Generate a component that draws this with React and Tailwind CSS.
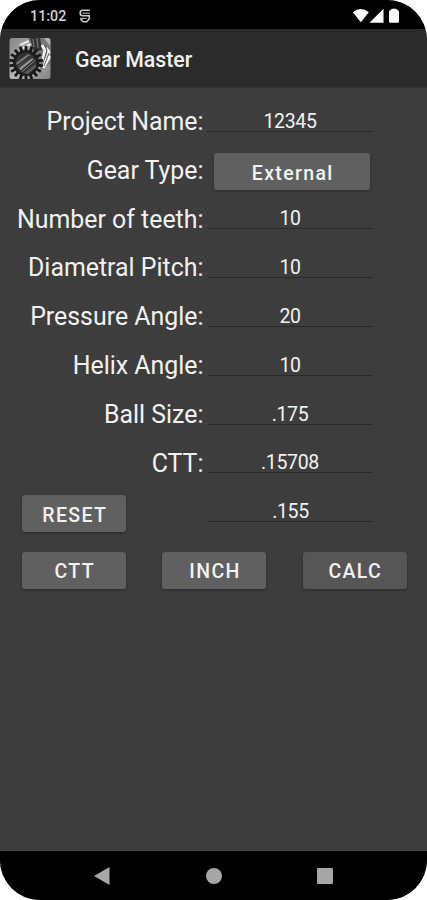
// App.jsx - Gear Master measurement form
import React, { useState } from 'react';

const fields = [
  { id: 'project', label: 'Project Name:', value: '12345' },
  { id: 'type', label: 'Gear Type:', button: 'External' },
  { id: 'teeth', label: 'Number of teeth:', value: '10' },
  { id: 'pitch', label: 'Diametral Pitch:', value: '10' },
  { id: 'pressure', label: 'Pressure Angle:', value: '20' },
  { id: 'helix', label: 'Helix Angle:', value: '10' },
  { id: 'ball', label: 'Ball Size:', value: '.175' },
  { id: 'ctt', label: 'CTT:', value: '.15708' },
];

const TEETH = Array.from({ length: 18 }, (_, i) => i * 20);

const GearLogo = () => (
  <svg width="42" height="42" viewBox="0 0 42 42" className="shrink-0 mt-px">
    <defs>
      <linearGradient id="plate" x1="0" y1="0" x2="1" y2="1">
        <stop offset="0" stopColor="#858585" />
        <stop offset="0.5" stopColor="#b5b5b5" />
        <stop offset="1" stopColor="#808080" />
      </linearGradient>
      <clipPath id="plateClip">
        <rect x="0.5" width="41" height="41" rx="2.5" />
      </clipPath>
    </defs>
    <g clipPath="url(#plateClip)">
      <rect width="42" height="42" fill="url(#plate)" />
      {/* Rear helical gear */}
      <path d="M19 0h16l6 8v18l-9 6-10-21z" fill="#777" />
      <path d="M21 0h10l2 12-8 2z" fill="#333" />
      <path d="M24 1l1 8M28 0l1 10" stroke="#777" strokeWidth="1.2" />
      <path d="M11 7l9-4M14 10l8-4" stroke="#e8e8e8" strokeWidth="2" />
      <path d="M33 7l3 5-2 10M37 10l3 4-5 14M41 18l-7 12" stroke="#f4f4f4" strokeWidth="3" fill="none" />
      <path d="M35.5 7l2.5 5-3 10M40 15l-5 13" stroke="#333" strokeWidth="0.8" fill="none" />
      {/* Front spur gear */}
      <g transform="translate(17 25)">
        {TEETH.map((a) => (
          <rect key={a} x="-1.4" y="-17.2" width="2.8" height="6" fill="#161616" transform={`rotate(${a})`} />
        ))}
        <circle r="13" fill="#1c1c1c" />
        <circle r="10.5" fill="#323232" />
        <path d="M-10 0L2-9l3 2-13 11z" fill="#777" />
        <path d="M-7 5L6-5l3 3L-4 9z" fill="#909090" />
        <path d="M-2 10L10 1v3L2 11z" fill="#5c5c5c" />
        <path d="M-9 3L4-7M-5 8L8-3" stroke="#222" strokeWidth="1.2" />
      </g>
    </g>
  </svg>
);

const StatusBar = () => (
  <div className="h-[29px] bg-black flex items-center justify-between pl-[30px] pr-[27px] pt-[3px]">
    <div className="flex items-center">
      <span className="w-[49px] text-[14.3px] leading-none font-medium text-[#d0d0d0]">11:02</span>
      <svg width="12" height="14" viewBox="0 0 12 14" fill="none" stroke="#c8c8c8" strokeWidth="1.6">
        <path d="M10.8 1.3H3.5Q1.2 1.3 1.2 4t2.3 2.7H10.3V9.8L7.8 12.8H4.2L1.5 9.8" />
        <path d="M3.5 4.2H10.8M1 9.4h6.5" strokeWidth="1" />
      </svg>
    </div>
    <svg width="48" height="16" viewBox="0 0 48 16" fill="#fff">
      <path d="M.8 4.2Q8.8-2.2 16.8 4.2L8.8 14.2z" />
      <path d="M31.5.8v14h-14z" />
      <path d="M40 .8h4l2 1.4q1 .8 1 1.8v9.4q0 1.4-1.4 1.4h-7.2q-1.4 0-1.4-1.4V4q0-1 1-1.8z" />
    </svg>
  </div>
);

const FormButton = ({ children, className = '', onClick }) => (
  <button
    type="button"
    onClick={onClick}
    className={`h-[37px] pt-1 pl-[1.5px] rounded-[3px] text-[19.5px] leading-none font-medium tracking-[1.35px] text-[#f2f2f2] shadow-[0_1px_3px_rgba(0,0,0,0.35)] ${className}`}
  >
    {children}
  </button>
);

const FormInput = ({ value, onChange, label }) => (
  <input
    aria-label={label}
    value={value}
    onChange={onChange}
    className="w-[165px] h-[31px] ml-1 mb-[9px] pt-[11px] bg-transparent border-b border-[#292929] text-center text-[19.5px] leading-none tracking-[-0.35px] text-[#f2f2f2] outline-none"
  />
);

const App = () => {
  const [values, setValues] = useState(
    Object.fromEntries(fields.map((f) => [f.id, f.value || '']))
  );
  const [result, setResult] = useState('.155');

  const update = (id) => (e) => setValues({ ...values, [id]: e.target.value });

  return (
    <div className="w-[427px] h-[900px] bg-white font-['Roboto',sans-serif]">
      <div className="h-full flex flex-col rounded-[40px] overflow-hidden bg-[#3d3d3d]">
        <StatusBar />

        <header className="h-[59px] bg-[#2b2b2b] flex items-center pl-[9px] gap-6 border-b border-[#333]">
          <GearLogo />
          <h1 className="pt-[3px] text-[21.3px] font-medium text-[#f2f2f2]">Gear Master</h1>
        </header>

        <main className="flex-1 pt-[8.5px]">
          {fields.map((field) => (
            <div key={field.id} className="h-[48.8px] flex items-center">
              <label className="w-[203.5px] shrink-0 pt-[3px] text-right text-[24.9px] leading-none text-[#f2f2f2]">
                {field.label}
              </label>
              {field.button ? (
                <FormButton className="w-[156px] ml-[10.5px] mt-1 bg-[#606060]">{field.button}</FormButton>
              ) : (
                <FormInput label={field.label} value={values[field.id]} onChange={update(field.id)} />
              )}
            </div>
          ))}

          <div className="h-[48.8px] flex items-center pl-[22px]">
            <FormButton className="w-[104px] mr-[78px] mt-1 bg-[#606060]">RESET</FormButton>
            <FormInput label="Result" value={result} onChange={(e) => setResult(e.target.value)} />
          </div>

          <div className="flex justify-between pl-[22px] pr-[20.5px] pt-4">
            <FormButton className="w-[104px] bg-[#606060]">CTT</FormButton>
            <FormButton className="w-[104px] bg-[#606060]">INCH</FormButton>
            <FormButton className="w-[104px] bg-[#565656]">CALC</FormButton>
          </div>
        </main>

        <nav className="h-[49px] bg-black flex items-center justify-between px-[94px]">
          <svg width="16" height="18" viewBox="0 0 16 18" fill="#a6a6a6">
            <path d="M15.5 0v18L0 9z" />
          </svg>
          <span className="size-4 rounded-full bg-[#a6a6a6]" />
          <span className="size-4 rounded-[1px] bg-[#a6a6a6]" />
        </nav>
      </div>
    </div>
  );
};

export default App;
